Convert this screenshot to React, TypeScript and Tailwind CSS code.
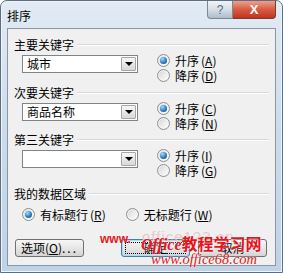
import React from "react";

type RadioProps = { checked?: boolean; label: string; acc: string };

function Radio({ checked, label, acc }: RadioProps) {
  return (
    <div className="flex items-center h-[15px]">
      <span className="w-[13px] h-[13px] rounded-full border border-[#8e8f8f] bg-linear-to-br from-[#d0d0d0] via-[#ececec] to-white flex items-center justify-center shadow-[inset_0_0_0_1px_#f4f4f4]">
        {checked && (
          <span className="w-[7px] h-[7px] rounded-full bg-[radial-gradient(circle_at_35%_30%,#9fdcff,#2a7fbf_55%,#0c3f6e)]" />
        )}
      </span>
      <span className="ml-[5px] leading-[15px] whitespace-nowrap">
        {label}
        <span className="ml-[2px]">
          (<span className="underline underline-offset-1">{acc}</span>)
        </span>
      </span>
    </div>
  );
}

function Combo({ text }: { text?: string }) {
  return (
    <div className="w-[116px] h-[18px] border border-[#7f8488] bg-white flex">
      <div className="flex-1 pl-[4px] leading-[16px] whitespace-nowrap">{text}</div>
      <div className="w-[15px] m-[1px] border border-[#a7a7a7] rounded-[1px] bg-linear-to-b from-[#f7f7f7] to-[#d8d8d8] flex items-center justify-center">
        <span className="w-0 h-0 border-x-[4px] border-x-transparent border-t-[4px] border-t-black" />
      </div>
    </div>
  );
}

function GroupLabel({ text }: { text: string }) {
  return (
    <div className="h-[16px] flex items-center">
      <span className="leading-[16px] whitespace-nowrap">{text}</span>
      <span className="flex-1 ml-[3px] h-[2px] border-t border-[#d6dadd] border-b border-b-white" />
    </div>
  );
}

function Section({
  label,
  value,
  acc1,
  acc2,
  h,
}: {
  label: string;
  value?: string;
  acc1: string;
  acc2: string;
  h: string;
}) {
  return (
    <div className={h}>
      <GroupLabel text={label} />
      <div className="flex items-start">
        <div className="ml-[8px] mt-[2px]">
          <Combo text={value} />
        </div>
        <div className="ml-[19px]">
          <Radio checked label="升序" acc={acc1} />
          <Radio label="降序" acc={acc2} />
        </div>
      </div>
    </div>
  );
}

function Button({ children, focus }: { children: React.ReactNode; focus?: boolean }) {
  return (
    <div
      className={`w-[69px] h-[18px] rounded-[3px] border ${
        focus ? "border-[#3c7fb1] shadow-[inset_0_0_0_1px_#a8dcf6]" : "border-[#707070]"
      } bg-linear-to-b from-[#f6f6f6] via-[#e6e6e6] to-[#d4d4d4] flex items-center justify-center leading-[16px] whitespace-nowrap`}
    >
      {focus ? (
        <span className="border border-dotted border-black w-[61px] h-[12px] flex items-center justify-center leading-[12px]">
          {children}
        </span>
      ) : (
        children
      )}
    </div>
  );
}

export default function App() {
  return (
    <div className="relative w-[283px] h-[273px] overflow-hidden bg-white font-['Noto_Sans_CJK_SC','Liberation_Sans',sans-serif] text-[12px] text-black">
      <div className="w-[283px] h-[273px] rounded-t-[7px] border border-[#5c6e82] bg-linear-to-b from-[#e2ebf4] via-[#cbdbeb] to-[#bfd2e6] flex flex-col shadow-[inset_0_0_0_1px_#eef4fa]">
        {/* title bar */}
        <div className="h-[27px] flex items-start relative">
          <span className="ml-[6px] mt-[7px] leading-[16px]">排序</span>
          <div className="ml-auto mr-[6px] flex">
            <div className="w-[26px] h-[18px] rounded-bl-[4px] border border-[#7b8898] border-t-0 bg-linear-to-b from-[#f0f4f8] via-[#d6dee7] to-[#aebccb] flex items-center justify-center text-[#5a6a7a] text-[12px] font-['Liberation_Sans',sans-serif] leading-none">
              ?
            </div>
            <div className="w-[43px] h-[18px] rounded-br-[4px] border border-[#7a3a30] border-t-0 border-l-0 bg-linear-to-b from-[#eba08e] via-[#d85a42] to-[#c0341c] flex items-center justify-center text-white font-bold text-[13px] font-['Liberation_Sans',sans-serif] leading-none">
              X
            </div>
          </div>
        </div>
        {/* client area */}
        <div className="mx-[6px] h-[238px] border border-[#8896a5] bg-[#f0f0f0] pt-[8px] pl-[6px] pr-[6px]">
          <Section label="主要关键字" value="城市" acc1="A" acc2="D" h="h-[48px]" />
          <Section label="次要关键字" value="商品名称" acc1="C" acc2="N" h="h-[47px]" />
          <Section label="第三关键字" acc1="I" acc2="G" h="h-[54px]" />
          <div className="h-[53px]">
            <GroupLabel text="我的数据区域" />
            <div className="flex mt-[5px] ml-[8px]">
              <Radio checked label="有标题行" acc="R" />
              <div className="ml-[20px]">
                <Radio label="无标题行" acc="W" />
              </div>
            </div>
          </div>
          <div className="flex ml-[1px]">
            <Button>
              选项(<span className="underline underline-offset-1">O</span>)
              <span className="tracking-[2px]">...</span>
            </Button>
            <div className="ml-[37px]">
              <Button focus>确定</Button>
            </div>
            <div className="ml-[8px]">
              <Button>取消</Button>
            </div>
          </div>
        </div>
      </div>

      {/* watermark */}
      <span className="absolute left-[142px] top-[229px] text-[15px] text-[#f2c4c4] font-['Liberation_Sans',sans-serif] tracking-[1px] leading-none">
        office123.cn
      </span>
      <span className="absolute left-[100px] top-[233px] text-[12px] font-bold text-[#e01a1a] font-['Liberation_Sans',sans-serif] leading-none">
        www.
      </span>
      <span className="absolute left-[141px] top-[235px] text-[16px] font-bold text-[#e8141c] leading-none whitespace-nowrap [text-shadow:0_0_2px_#fff]">
        <span className="italic font-['Liberation_Serif',serif]">Office</span>教程学习网
      </span>
      <span className="absolute left-[151px] top-[252px] text-[14.5px] italic text-[#e01818] font-['Liberation_Serif',serif] leading-none whitespace-nowrap [text-shadow:0_0_2px_#fff]">
        www.office68.com
      </span>
    </div>
  );
}
